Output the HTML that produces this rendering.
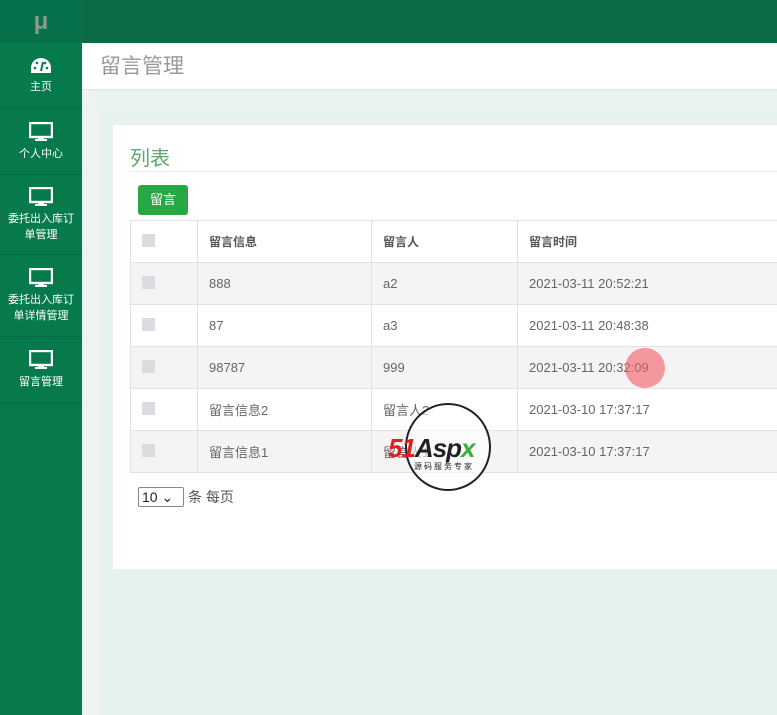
<!DOCTYPE html>
<html><head><meta charset="utf-8"><style>
*{margin:0;padding:0;box-sizing:border-box}
body{width:777px;height:715px;overflow:hidden;font-family:"Liberation Sans","Noto Sans CJK SC",sans-serif;background:#eaf3ee;position:relative}
.side{position:absolute;left:0;top:0;width:82px;height:715px;background:#077a4c}
.logo{height:43px;background:#06704a;color:#8a9a90;font-size:24px;font-weight:bold;text-align:center;line-height:43px}
.item{border-bottom:1px solid #0a6d46;color:#fff;font-size:11px;text-align:center;display:flex;flex-direction:column;align-items:center;justify-content:center;line-height:16px}
.item svg{margin-bottom:4px}
.top{position:absolute;left:82px;top:0;right:0;height:43px;background:#0b6b45}
.hdr{position:absolute;left:82px;top:43px;right:0;height:47px;background:#fff;border-bottom:1px solid #e0e6e2;font-size:21px;color:#999;padding-left:18px;line-height:47px}
.strip{position:absolute;left:82px;top:91px;width:16px;bottom:0;background:#eef3f1}
.bg{position:absolute;left:98px;top:108px;right:0;bottom:0;background:#e6f2ec}
.card{position:absolute;left:113px;top:125px;right:0;height:444px;background:#fff}
.title{position:absolute;left:17px;top:17px;font-size:20px;color:#5aa86d}
.line{position:absolute;left:17px;right:0;top:46px;border-top:1px solid #eee}
.btn{position:absolute;left:25px;top:60px;width:50px;height:30px;background:#28a745;color:#fff;border-radius:3px;font-size:13px;text-align:center;line-height:30px}
table{position:absolute;left:17px;top:95px;border-collapse:collapse;font-size:13px;color:#666;table-layout:fixed;width:700px}
td{border:1px solid #e2e2e2;height:42px;padding-left:11px;vertical-align:middle}
tr.s td{background:#f4f4f4}
th{border:1px solid #e2e2e2;height:42px;padding-left:11px;text-align:left;font-size:12px;color:#555;font-weight:bold}
.cb{width:13px;height:13px;background:#dcdce0;display:inline-block}
.sel{position:absolute;left:25px;top:362px;font-size:14px;color:#555}
.sel span{display:inline-block;width:46px;height:20px;border:1px solid #888;border-radius:2px;padding-left:3px;line-height:18px;color:#222;margin-right:4px}
</style></head><body>
<div class="side">
<div class="logo">μ</div>
<div class="item" style="height:66px"><svg width="22" height="18" viewBox="0 0 22 18"><path d="M11 1A10 10 0 0 0 1 11v5h20v-5A10 10 0 0 0 11 1z" fill="#fff"/><circle cx="5" cy="11" r="1.3" fill="#077a4c"/><circle cx="7" cy="6" r="1.3" fill="#077a4c"/><circle cx="15" cy="6" r="1.3" fill="#077a4c"/><circle cx="17" cy="11" r="1.3" fill="#077a4c"/><path d="M11 14L13 5" stroke="#077a4c" stroke-width="2"/></svg>主页</div>
<div class="item" style="height:66px"><svg width="24" height="20" viewBox="0 0 24 20"><rect x="1" y="1" width="22" height="14" fill="none" stroke="#fff" stroke-width="2.4"/><rect x="9" y="15" width="6" height="3" fill="#fff"/><rect x="6" y="17" width="12" height="2" fill="#fff"/></svg>个人中心</div>
<div class="item" style="height:80px"><svg width="24" height="20" viewBox="0 0 24 20"><rect x="1" y="1" width="22" height="14" fill="none" stroke="#fff" stroke-width="2.4"/><rect x="9" y="15" width="6" height="3" fill="#fff"/><rect x="6" y="17" width="12" height="2" fill="#fff"/></svg>委托出入库订<br>单管理</div>
<div class="item" style="height:82px"><svg width="24" height="20" viewBox="0 0 24 20"><rect x="1" y="1" width="22" height="14" fill="none" stroke="#fff" stroke-width="2.4"/><rect x="9" y="15" width="6" height="3" fill="#fff"/><rect x="6" y="17" width="12" height="2" fill="#fff"/></svg>委托出入库订<br>单详情管理</div>
<div class="item" style="height:66px"><svg width="24" height="20" viewBox="0 0 24 20"><rect x="1" y="1" width="22" height="14" fill="none" stroke="#fff" stroke-width="2.4"/><rect x="9" y="15" width="6" height="3" fill="#fff"/><rect x="6" y="17" width="12" height="2" fill="#fff"/></svg>留言管理</div>
</div>
<div class="top"></div>
<div class="hdr">留言管理</div>
<div class="strip"></div>
<div class="bg"></div>
<div class="card">
<div class="title">列表</div><div class="line"></div>
<div class="btn">留言</div>
<table>
<colgroup><col style="width:67px"><col style="width:174px"><col style="width:146px"><col style="width:313px"></colgroup>
<tr><th><span class="cb"></span></th><th>留言信息</th><th>留言人</th><th>留言时间</th></tr>
<tr class="s"><td><span class="cb"></span></td><td>888</td><td>a2</td><td>2021-03-11 20:52:21</td></tr>
<tr><td><span class="cb"></span></td><td>87</td><td>a3</td><td>2021-03-11 20:48:38</td></tr>
<tr class="s"><td><span class="cb"></span></td><td>98787</td><td>999</td><td>2021-03-11 20:32:09</td></tr>
<tr><td><span class="cb"></span></td><td>留言信息2</td><td>留言人2</td><td>2021-03-10 17:37:17</td></tr>
<tr class="s"><td><span class="cb"></span></td><td>留言信息1</td><td>留言人1</td><td>2021-03-10 17:37:17</td></tr>
</table>
<div class="sel"><span>10 ⌄</span>条 每页</div>
</div>
<div style="position:absolute;left:625px;top:348px;width:40px;height:40px;border-radius:50%;background:rgba(240,90,100,.6)"></div>
<div style="position:absolute;left:405px;top:403px;width:86px;height:88px;border:2px solid #222;border-radius:50%;background:rgba(255,255,255,.6)"></div>
<div style="position:absolute;left:388px;top:434px;font-size:26px;font-weight:bold;font-style:italic;letter-spacing:-1px;line-height:28px"><span style="color:#e02020">51</span><span style="color:#222">Asp</span><span style="color:#3aae3a">x</span></div>
<div style="position:absolute;left:414px;top:461px;font-size:8px;color:#222;letter-spacing:2px">源码服务专家</div>
</body></html>
